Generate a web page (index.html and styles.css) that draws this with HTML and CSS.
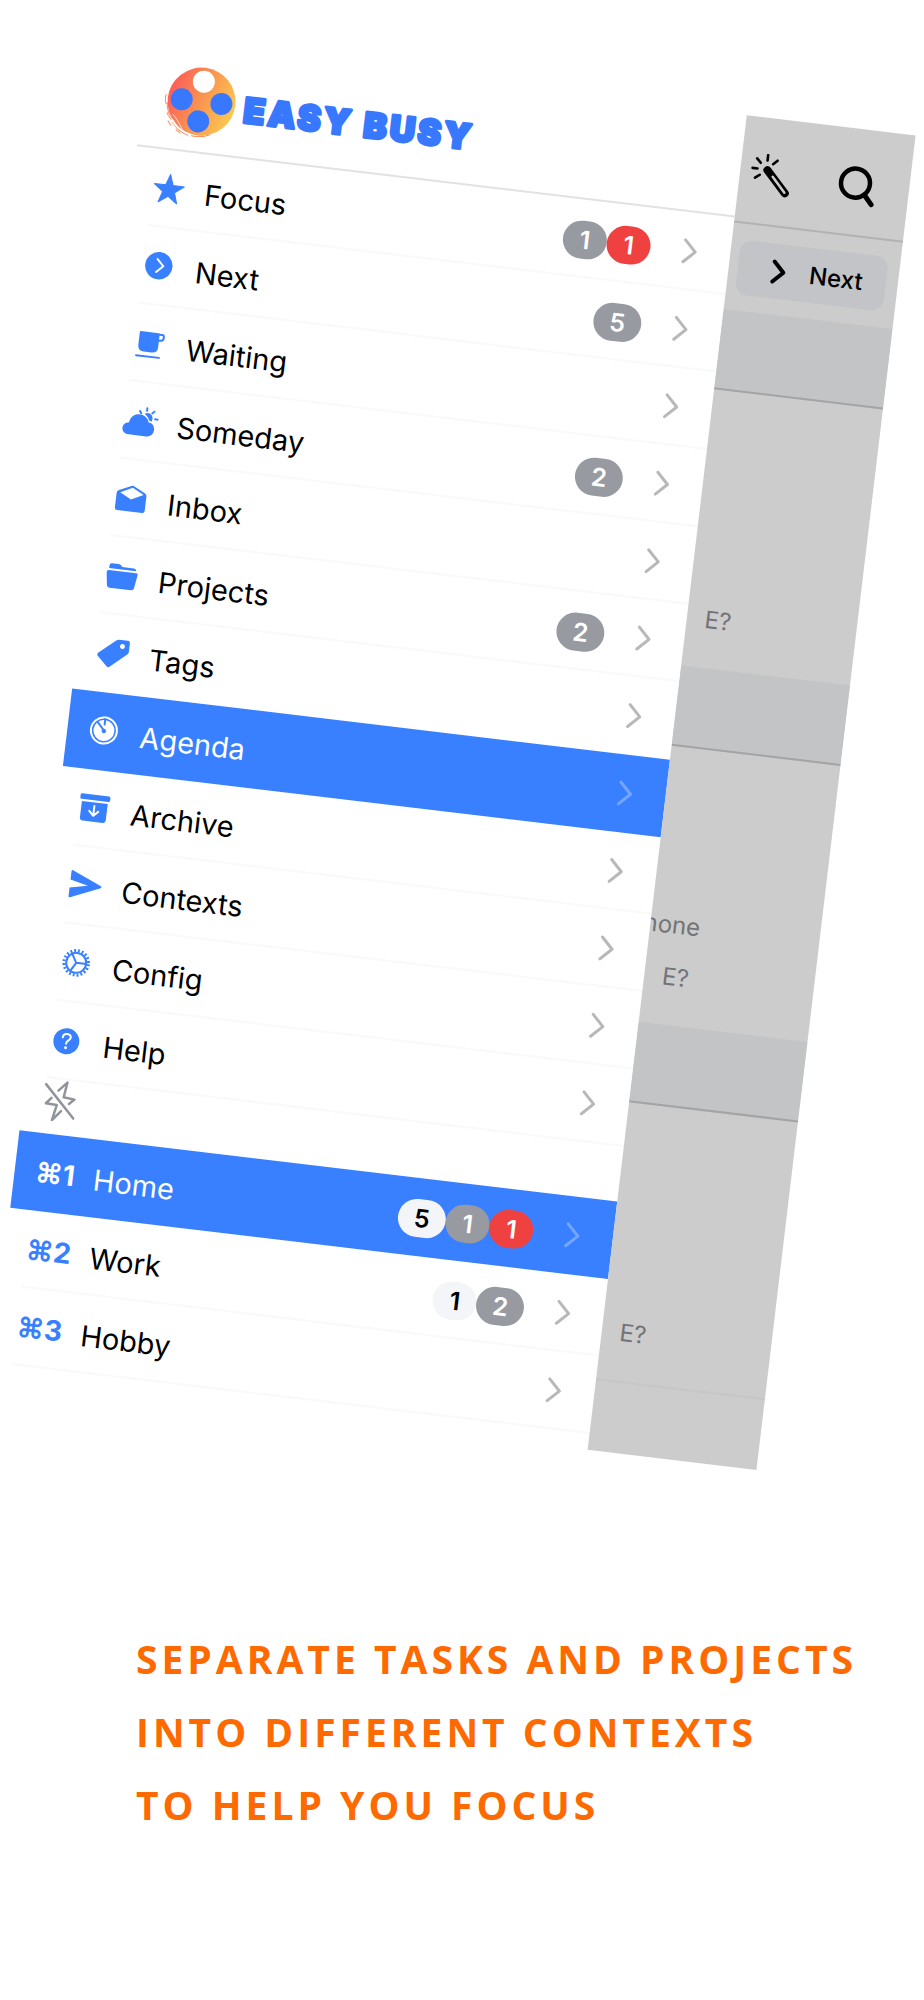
FILE: index.html
```html
<!DOCTYPE html>
<html lang="en">
<head>
<meta charset="utf-8">
<meta name="viewport" content="width=device-width, initial-scale=1">
<title>Easy Busy</title>
<link rel="stylesheet" href="styles.css">
</head>
<body>
<main class="poster">
  <div class="phone">
    <aside class="drawer">
      <header class="brand">
        <svg class="brand-mark" viewBox="-37 -37 74 74" aria-hidden="true">
          <defs>
            <linearGradient id="ball" x1="0" y1="0.3" x2="1" y2="0.6">
              <stop offset="0" stop-color="#ff5858"/>
              <stop offset="0.5" stop-color="#f99450"/>
              <stop offset="1" stop-color="#fdc94f"/>
            </linearGradient>
          </defs>
          <circle r="34" fill="url(#ball)"/>
          <path d="M-34 5q1 9 6 15M-36 -3q-1 5 1 9M-33 15q2 4 5 6M-27 24q7 8 17 11M-31 23l3 4M-22 31l5 3M-6 35q10 1 18-3" fill="none" stroke="#fa8a5a" stroke-width="1" stroke-linecap="round" stroke-dasharray="5 1 2 1"/>
          <path d="M-31 17q6 5 11 12M-27 16q6 5 11 14M-29 22q4 3 6 7" fill="none" stroke="#fff" stroke-width="1" stroke-linecap="round" opacity=".6"/>
          <circle cy="-20" r="11" fill="#fff"/>
          <circle cx="-20" r="11" fill="#3778ff"/>
          <circle cx="20" r="11" fill="#3778ff"/>
          <circle cx="-1" cy="20" r="11" fill="#3778ff"/>
        </svg>
        <svg class="brand-name" viewBox="0 0 240 44" role="img" aria-label="Easy Busy"><text x="2" y="38">EASY BUSY</text></svg>
      </header>
      <nav>
        <ul class="menu">
          <li><a class="row" href="#focus">
            <svg class="icon" viewBox="0 0 32 32"><path d="M16 1l3.7 10.700 11.300.2-9 6.800 3.300 10.800-9.300-6.500-9.300 6.500 3.300-10.800-9-6.800 11.300-.2z" stroke="currentColor" stroke-linejoin="round"/></svg>
            <span class="label">Focus</span><span class="badges"><span class="badge">1</span><span class="badge red">1</span></span>
            <svg class="chev" viewBox="0 0 16 26"><path d="M3 3l10 10L3 23"/></svg></a></li>
          <li><a class="row" href="#next">
            <svg class="icon" viewBox="0 0 32 32"><circle cx="15" cy="15" r="13.700"/><path class="cut" d="M13 8.500l6.500 6.500-6.500 6.500"/></svg>
            <span class="label">Next</span><span class="badges"><span class="badge">5</span></span>
            <svg class="chev" viewBox="0 0 16 26"><path d="M3 3l10 10L3 23"/></svg></a></li>
          <li><a class="row" href="#waiting">
            <svg class="icon" viewBox="0 0 32 32"><path d="M5 4h18q1 0 1 1v13q0 6-6 6h-8q-6 0-6-6V5q0-1 1-1z"/><path class="line" d="M24 5.500h2.500q2 0 2 2v1q0 3-4.500 3M3 28.500h23"/></svg>
            <span class="label">Waiting</span>
            <svg class="chev" viewBox="0 0 16 26"><path d="M3 3l10 10L3 23"/></svg></a></li>
          <li><a class="row" href="#someday">
            <svg class="icon" viewBox="0 0 32 32"><path d="M5 30c-9 0-9-11-1-12 1-12 17-12 19.500-2 8 0 9 14-1 14z"/><path d="M18.500 8c4-4 11 1 7.500 7-1-1-1.500-1-2.500-1.500-1-2.500-2.500-4-5-5.500z"/><path class="line" d="M13.500 5.500l1.500 2M20.500 2v2.500M28 4.500l-2 2M29.500 12h2.500"/></svg>
            <span class="label">Someday</span><span class="badges"><span class="badge">2</span></span>
            <svg class="chev" viewBox="0 0 16 26"><path d="M3 3l10 10L3 23"/></svg></a></li>
          <li><a class="row" href="#inbox">
            <svg class="icon" viewBox="0 0 32 32"><path fill-rule="evenodd" d="M2 8.500L14 3q1.500-.7 3 0l11 5.500q2 1 2 3V26q0 2.500-2.500 2.500H2.500Q0 28.500 0 26V11.500Q0 9.500 2 8.500zM3.500 10.500l11.500 6 12-6-11.500-6z"/></svg>
            <span class="label">Inbox</span>
            <svg class="chev" viewBox="0 0 16 26"><path d="M3 3l10 10L3 23"/></svg></a></li>
          <li><a class="row" href="#projects">
            <svg class="icon" viewBox="0 0 32 32"><path d="M1.500 9V6.500Q1.500 4 4 4h6.500q1.500 0 2.500 1l1.500 1.500H26q2.500 0 2.500 2.500z"/><path d="M1.500 11H29q2 0 1.500 2.500l-2 13q-.4 2-2.500 2H4q-2.500 0-2.800-2.500L-.5 13.500Q-.7 11 1.500 11z"/></svg>
            <span class="label">Projects</span><span class="badges"><span class="badge">2</span></span>
            <svg class="chev" viewBox="0 0 16 26"><path d="M3 3l10 10L3 23"/></svg></a></li>
          <li><a class="row plain" href="#tags">
            <svg class="icon" viewBox="0 0 32 32"><path fill-rule="evenodd" d="M20 1h8.500Q31 1 31 3.500V12q0 1.500-1 2.500L13.500 29q-1.500 1.500-3 0l-10-9.500q-1.500-1.500 0-3L17.500 2Q18.500 1 20 1zM24 5a2.500 2.500 0 1 0 .01 0z"/></svg>
            <span class="label">Tags</span>
            <svg class="chev" viewBox="0 0 16 26"><path d="M3 3l10 10L3 23"/></svg></a></li>
          <li><a class="row active" href="#agenda" aria-current="page">
            <svg class="icon" viewBox="0 0 32 32"><circle class="line" cx="15.500" cy="15" r="13"/><circle cx="15.500" cy="15" r="10.500"/><path class="cut" d="M8.500 7.500l7 7.500M15.500 3.500V9"/><circle cx="15.500" cy="15.500" r="2.200" fill="#3880ff"/></svg>
            <span class="label">Agenda</span>
            <svg class="chev" viewBox="0 0 16 26"><path d="M3 3l10 10L3 23"/></svg></a></li>
          <li><a class="row" href="#archive">
            <svg class="icon" viewBox="0 0 32 32"><rect x="0" y="2" width="30" height="5.500" rx="1.500"/><path d="M2 9.500h26V26q0 3-3 3H5q-3 0-3-3z"/><path class="cut" d="M15 13v10M10.500 18.500L15 23l4.500-4.500"/></svg>
            <span class="label">Archive</span>
            <svg class="chev" viewBox="0 0 16 26"><path d="M3 3l10 10L3 23"/></svg></a></li>
          <li><a class="row" href="#contexts">
            <svg class="icon" viewBox="0 0 32 32"><path d="M0 2.500Q0 1 1.500 1.500L31 14q1.500 1 0 2L1.500 28.500Q0 29 0 27.500V19l18-4-18-4z"/></svg>
            <span class="label">Contexts</span>
            <svg class="chev" viewBox="0 0 16 26"><path d="M3 3l10 10L3 23"/></svg></a></li>
          <li><a class="row" href="#config">
            <svg class="icon" viewBox="0 0 32 32"><circle class="line" cx="15.500" cy="15" r="10"/><circle class="teeth" cx="15.500" cy="15" r="12.300"/><path class="line" d="M15.500 15h10M15.500 15l-5-8.700M15.500 15l-5 8.700"/></svg>
            <span class="label">Config</span>
            <svg class="chev" viewBox="0 0 16 26"><path d="M3 3l10 10L3 23"/></svg></a></li>
          <li><a class="row" href="#help">
            <svg class="icon" viewBox="0 0 32 32"><circle cx="15" cy="16" r="13"/><path class="cut" d="M11 12.500c0-5 8-5 8-.5 0 3-4 3-4 6.500"/><circle cx="15" cy="22.500" r="1.500" fill="#fff"/></svg>
            <span class="label">Help</span>
            <svg class="chev" viewBox="0 0 16 26"><path d="M3 3l10 10L3 23"/></svg></a></li>
        </ul>
        <button class="flash" type="button" aria-label="Flash off">
          <svg viewBox="-18 -21 36 42"><path d="M-16-15L15 16M-3-10L5-19 3-4 14-3 9 2M-9-2L-14 4-3 4.500-6 20 2 10"/></svg>
        </button>
        <ul class="menu">
          <li><a class="row active" href="#home" aria-current="true">
            <span class="key">⌘1</span><span class="label">Home</span><span class="badges"><span class="badge light">5</span><span class="badge">1</span><span class="badge red">1</span></span>
            <svg class="chev" viewBox="0 0 16 26"><path d="M3 3l10 10L3 23"/></svg></a></li>
          <li><a class="row" href="#work">
            <span class="key">⌘2</span><span class="label">Work</span><span class="badges"><span class="badge light">1</span><span class="badge">2</span></span>
            <svg class="chev" viewBox="0 0 16 26"><path d="M3 3l10 10L3 23"/></svg></a></li>
          <li><a class="row" href="#hobby">
            <span class="key">⌘3</span><span class="label">Hobby</span>
            <svg class="chev" viewBox="0 0 16 26"><path d="M3 3l10 10L3 23"/></svg></a></li>
        </ul>
      </nav>
    </aside>
    <section class="page">
      <div class="toolbar">
        <button type="button" aria-label="Magic"><svg viewBox="-22 -22 44 44">
          <path d="M-4-6L16 15" stroke-width="8"/><path d="M2 0L15.500 14.500" stroke="#ccc" stroke-width="2.500"/>
          <path d="M-19-6.500h5M-15.500-16.500l4 4M-5-21v5.500M5-16.500L1-12.500M-15.500 3L-11-.5" stroke-width="2.600"/></svg></button>
        <button type="button" aria-label="Search"><svg viewBox="0 0 44 44"><circle cx="20" cy="18.500" r="14.500" stroke-width="4.500"/><path d="M30 29L38 38" stroke-width="5"/></svg></button>
      </div>
      <button class="next" type="button"><svg class="chev" viewBox="0 0 16 26"><path d="M3 3l10 10L3 23"/></svg>Next</button>
      <div class="band"></div>
      <div class="day"><span class="note">E?</span></div>
      <div class="band"></div>
      <div class="day"><span class="clip"><span>iPhone</span></span><span class="note">E?</span></div>
      <div class="band"></div>
      <div class="day"><span class="note">E?</span></div>
      <div class="rest"></div>
    </section>
  </div>
  <h1 class="caption">SEPARATE TASKS AND PROJECTS<br>INTO DIFFERENT CONTEXTS<br>TO HELP YOU FOCUS</h1>
</main>
</body>
</html>
```
FILE: styles.css
```css
* { box-sizing: border-box; }
body {
  margin: 0;
  background: #fff;
  color: #000;
  font-family: Inter, "Liberation Sans", sans-serif;
}
.poster {
  min-height: 100vh;
  padding-top: 44px;
  overflow: hidden;
}
.phone {
  display: flex;
  margin-left: 149px;
  margin-right: 3px;
  transform: rotate(6.8deg);
  transform-origin: 0 0;
}
.drawer { flex: 1; min-width: 0; background: #fff; padding-bottom: 16px; }
.brand {
  display: flex;
  align-items: center;
  gap: 4px;
  height: 103px;
  padding-left: 22px;
  border-bottom: 2px solid #e2e2e2;
}
.brand-mark { width: 74px; height: 74px; }
.brand-name { width: 240px; height: 44px; overflow: visible; }
.brand-name text {
  font-family: Inter, sans-serif;
  font-weight: 900;
  font-size: 35px;
  letter-spacing: 3px;
  fill: #3778ff;
  stroke: #3778ff;
  stroke-width: 3px;
  stroke-linejoin: round;
}
.menu { list-style: none; margin: 0; padding: 0; }
.row {
  display: flex;
  align-items: center;
  height: 78px;
  padding: 0 32px 0 21px;
  color: #000;
  text-decoration: none;
  font-size: 29px;
  background: linear-gradient(#f9f9f9, #f9f9f9) 20px 100% / 100% 2px no-repeat;
}
.row.plain { background: none; }
.row.active { background: #3880ff; color: #fff; }
.icon {
  width: 32px;
  height: 32px;
  margin-right: 20px;
  overflow: visible;
  color: #3880ff;
  fill: currentColor;
}
.icon .line { fill: none; stroke: currentColor; stroke-width: 2px; stroke-linecap: round; }
.icon .teeth { fill: none; stroke: currentColor; stroke-width: 3px; stroke-dasharray: 1.900 1.964; }
.icon .cut { fill: none; stroke: #fff; stroke-width: 2px; stroke-linecap: round; stroke-linejoin: round; }
.active .icon { color: #fff; }
.active .icon .cut { stroke: #3880ff; }
.label { flex: 1; padding-top: 2px; }
.key { color: #3880ff; font-size: 28px; font-weight: 700; margin-right: 19px; }
.active .key { color: #fff; }
.badges { display: flex; margin-right: 32px; padding-top: 2px; }
.badge {
  min-width: 44px;
  height: 38px;
  padding: 0 16px;
  border-radius: 19px;
  background: #989aa2;
  color: #fff;
  font-size: 25px;
  font-weight: 600;
  line-height: 38px;
  text-align: center;
}
.badge.red { background: #f04141; }
.badge.light { background: #f4f5f8; color: #000; }
.chev {
  width: 16px;
  height: 26px;
  fill: none;
  stroke: #b8b8b8;
  stroke-width: 3px;
  stroke-linecap: round;
  stroke-linejoin: round;
  overflow: visible;
}
.row .chev path { d: path("M2 2l11 11L2 24"); }
.active .chev { stroke: #74a6ff; }
.flash {
  display: block;
  height: 55px;
  padding: 0 19px 13px;
  border: 0;
  background: none;
}
.flash svg {
  display: block;
  width: 36px;
  height: 42px;
  fill: none;
  stroke: #92949c;
  stroke-width: 2.500px;
  stroke-linecap: round;
  stroke-linejoin: round;
}
.page {
  display: flex;
  flex-direction: column;
  width: 170px;
  background: #ccc;
  overflow: hidden;
}
.toolbar {
  display: flex;
  align-items: center;
  gap: 43px;
  height: 108px;
  padding: 10px 0 0 9px;
  border-bottom: 2px solid #b2b2b3;
}
.toolbar button { border: 0; padding: 0; background: none; }
.toolbar svg {
  display: block;
  width: 44px;
  height: 44px;
  fill: none;
  stroke: #000;
  stroke-linecap: round;
}
.next {
  display: flex;
  align-items: center;
  gap: 23px;
  height: 55px;
  margin: 16px 12px 16px 9px;
  padding: 0 0 0 33px;
  border: 0;
  border-radius: 12px;
  background: #c3c4c7;
  color: #000;
  font: 500 24px Inter, sans-serif;
}
.next .chev { stroke: #000; stroke-width: 4px; }
.band { height: 81px; background: #c3c4c6; border-bottom: 2px solid #a3a4a6; }
.day {
  display: flex;
  flex-direction: column;
  justify-content: flex-end;
  gap: 20px;
  height: 278px;
  padding: 0 0 32px 18px;
  color: #737378;
  font-size: 24px;
  line-height: 32px;
}
.clip { display: flex; justify-content: flex-end; width: 32px; }
.rest { height: 72px; border-top: 2px solid #c6c6c8; }
.caption {
  margin: 234px 0 0 136px;
  color: #ff6a00;
  font: 700 39px/73px "Open Sans", "Noto Sans", sans-serif;
  letter-spacing: 4px;
  white-space: nowrap;
}
```
